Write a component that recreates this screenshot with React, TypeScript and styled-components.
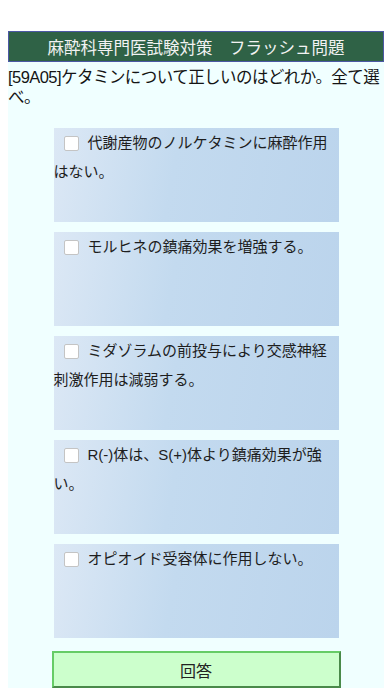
import React from "react";
import styled, { createGlobalStyle } from "styled-components";

const GlobalStyle = createGlobalStyle`
  html, body { background: #ffffff; }
  body {
    margin: 8px;
    font-family: "Liberation Sans", "Noto Sans CJK JP", sans-serif;
    color: #1a1a1a;
  }
`;

const Page = styled.div`
  padding-top: 23px;
`;

const Header = styled.header`
  box-sizing: border-box;
  height: 31px;
  display: flex;
  align-items: center;
  justify-content: center;
  background: #2f6246;
  border: 1px solid #4c58a4;
  color: #f2f2f2;
  font-size: 16.5px;
`;

const Content = styled.main`
  background: #f0ffff;
  padding-top: 5px;
  display: flex;
  flex-direction: column;
  align-items: center;
`;

const Question = styled.p`
  align-self: stretch;
  margin: 0;
  font-size: 16.5px;
  letter-spacing: -0.55px;
  line-height: 20px;
  color: #141414;
`;

const Choices = styled.div`
  margin-top: 21px;
  width: 285px;
  display: flex;
  flex-direction: column;
  gap: 10px;
`;

const Choice = styled.label`
  box-sizing: border-box;
  display: block;
  height: 94px;
  padding-right: 8px;
  background: linear-gradient(100deg, #dce8f5 0%, #c3daef 42%, #bbd4ec 100%);
  font-size: 15px;
  line-height: 29px;
  color: #1e1e1e;
`;

const Box = styled.input.attrs({ type: "checkbox" })`
  appearance: none;
  -webkit-appearance: none;
  box-sizing: border-box;
  width: 15px;
  height: 15px;
  margin: 0 9px 0 10px;
  vertical-align: -3px;
  background: #ffffff;
  border: 1px solid #c4c4c4;
  border-radius: 2px;
`;

const AnswerButton = styled.button`
  box-sizing: border-box;
  margin-top: 13px;
  width: 289px;
  height: 37px;
  background: #ccffcc;
  border-style: solid;
  border-width: 2px;
  border-color: #66cc66 #4a8a4a #4a8a4a #66cc66;
  font-family: "Liberation Sans", "Noto Sans CJK JP", sans-serif;
  font-size: 16px;
  color: #222222;
  padding: 0;
`;

const choices = [
  "代謝産物のノルケタミンに麻酔作用はない。",
  "モルヒネの鎮痛効果を増強する。",
  "ミダゾラムの前投与により交感神経刺激作用は減弱する。",
  "R(-)体は、S(+)体より鎮痛効果が強い。",
  "オピオイド受容体に作用しない。",
];

export default function App() {
  return (
    <>
      <GlobalStyle />
      <Page>
        <Header>麻酔科専門医試験対策　フラッシュ問題</Header>
        <Content>
          <Question>[59A05]ケタミンについて正しいのはどれか。全て選べ。</Question>
          <Choices>
            {choices.map((c) => (
              <Choice key={c}>
                <Box />
                {c}
              </Choice>
            ))}
          </Choices>
          <AnswerButton>回答</AnswerButton>
        </Content>
      </Page>
    </>
  );
}
